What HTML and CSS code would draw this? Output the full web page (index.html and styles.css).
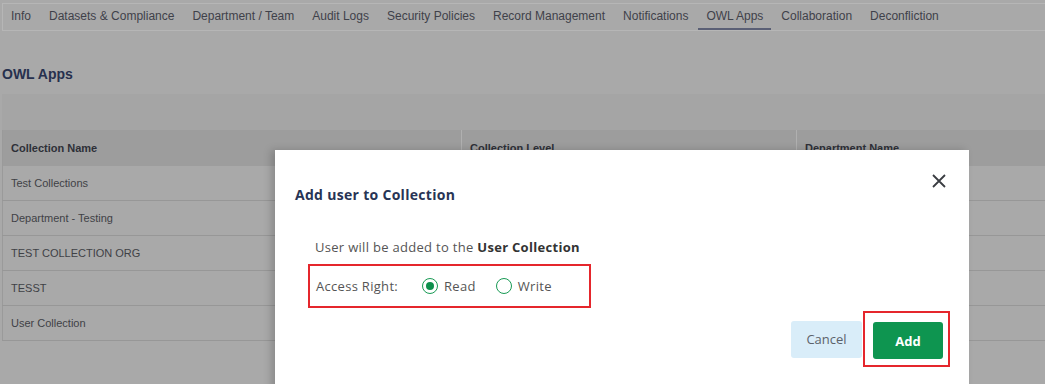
FILE: index.html
```html
<!DOCTYPE html>
<html lang="en">
<head>
  <meta charset="UTF-8">
  <title>OWL Apps</title>
  <link rel="stylesheet" href="styles.css">
</head>
<body>
  <div class="page">
    <nav class="tabs">
      <a>Info</a>
      <a>Datasets &amp; Compliance</a>
      <a>Department / Team</a>
      <a>Audit Logs</a>
      <a>Security Policies</a>
      <a>Record Management</a>
      <a>Notifications</a>
      <a class="active">OWL Apps</a>
      <a>Collaboration</a>
      <a>Deconfliction</a>
    </nav>

    <h2 class="section-title">OWL Apps</h2>

    <div class="toolbar"></div>
    <table class="grid">
      <thead>
        <tr>
          <th class="c-name">Collection Name</th>
          <th class="c-level">Collection Level</th>
          <th>Department Name</th>
        </tr>
      </thead>
      <tbody>
        <tr><td>Test Collections</td><td></td><td></td></tr>
        <tr><td>Department - Testing</td><td></td><td></td></tr>
        <tr><td>TEST COLLECTION ORG</td><td></td><td></td></tr>
        <tr><td>TESST</td><td></td><td></td></tr>
        <tr><td>User Collection</td><td></td><td></td></tr>
      </tbody>
    </table>
  </div>

  <div class="modal">
    <div class="modal-head">
      <h3>Add user to Collection</h3>
      <button class="close" aria-label="Close">
        <svg width="14" height="14" viewBox="0 0 14 14"><path d="M1 1L13 13M13 1L1 13" stroke="#3a3d42" stroke-width="1.8" fill="none"/></svg>
      </button>
    </div>
    <div class="modal-body">
      <p class="note">User will be added to the <b>User Collection</b></p>
      <div class="access highlight">
        <span class="label">Access Right:</span>
        <label class="radio checked"><span class="dot"></span>Read</label>
        <label class="radio"><span class="dot"></span>Write</label>
      </div>
    </div>
    <div class="modal-foot">
      <button class="btn-cancel">Cancel</button>
      <span class="highlight add-wrap"><button class="btn-add">Add</button></span>
    </div>
  </div>
</body>
</html>
```

FILE: styles.css
```css
body {
  margin: 0;
  background: #a9a9a9;
  font-family: 'Liberation Sans', Arial, sans-serif;
  color: #3d3f44;
  height: 384px;
  overflow: hidden;
  position: relative;
}
.page {
  padding: 3px 0 0 2px;
}
.tabs {
  display: flex;
  gap: 2px;
  height: 26px;
  border: 1px solid #b6b6b6;
  border-right: none;
  font-size: 12px;
}
.tabs a {
  padding: 0 8px;
  line-height: 25px;
  color: #3f414a;
  border-bottom: 2px solid transparent;
}
.tabs a.active {
  border-bottom-color: #5a5f75;
}
.section-title {
  margin: 35px 0 0 0;
  font-size: 14px;
  color: #26304e;
}
.toolbar {
  height: 36px;
  margin-top: 12px;
  background: #a5a5a5;
}
.grid {
  width: 1100px;
  border-collapse: collapse;
  font-size: 11px;
  color: #3f4146;
  border-left: 1px solid #9a9a9a;
}
.grid th {
  background: #9d9d9d;
  text-align: left;
  height: 36px;
  padding: 0 8px;
  color: #2e3038;
  border-left: 1px solid #b0b0b0;
}
.grid th:first-child {
  border-left: none;
}
.grid .c-name {
  width: 442px;
}
.grid .c-level {
  width: 318px;
}
.grid td {
  height: 34px;
  padding: 0 8px;
  border-bottom: 1px solid #979797;
}
.modal {
  position: absolute;
  left: 275px;
  top: 150px;
  width: 694px;
  height: 260px;
  background: #fff;
  box-shadow: -4px 0 8px rgba(0,0,0,0.18);
  font-family: 'Open Sans', 'Liberation Sans', sans-serif;
}
.modal-head {
  display: flex;
  justify-content: space-between;
  padding: 20px 20px 0 20px;
}
.modal-head h3 {
  margin: 15px 0 0 0;
  font-size: 14px;
  letter-spacing: 0.3px;
  color: #283455;
}
.close {
  border: none;
  background: none;
  padding: 0;
  width: 20px;
  height: 20px;
  margin: 2px 0 0 0;
}
.modal-body {
  padding: 34px 0 0 33px;
  letter-spacing: 0.3px;
}
.note {
  margin: 0 0 0 7px;
  font-size: 13px;
  color: #555;
}
.note b {
  color: #333;
}
.access {
  display: flex;
  align-items: center;
  width: 273px;
  height: 40px;
  margin-top: 8px;
  padding-left: 6px;
  font-size: 13px;
  color: #555;
}
.highlight {
  border: 2px solid #e5262c;
}
.access .label {
  margin-right: 24px;
}
.radio {
  display: flex;
  align-items: center;
  margin-right: 20px;
}
.radio .dot {
  width: 16px;
  height: 16px;
  border: 1.5px solid #189a54;
  border-radius: 50%;
  margin-right: 6px;
  box-sizing: border-box;
  position: relative;
}
.radio.checked .dot::after {
  content: '';
  position: absolute;
  left: 2.5px;
  top: 2.5px;
  width: 8px;
  height: 8px;
  border-radius: 50%;
  background: #0e8f4c;
}
.modal-foot {
  display: flex;
  justify-content: flex-end;
  align-items: center;
  padding: 3px 19px 0 0;
}
.btn-cancel {
  width: 71px;
  height: 37px;
  border: none;
  border-radius: 3px;
  background: #d9edf9;
  color: #5c626b;
  font-size: 13px;
  font-family: inherit;
  margin-right: 1px;
}
.add-wrap {
  display: flex;
  padding: 9px 5px 6px 8px;
}
.btn-add {
  width: 70px;
  height: 37px;
  border: none;
  border-radius: 3px;
  background: #0e9550;
  color: #fff;
  font-weight: bold;
  font-size: 13px;
  font-family: inherit;
}
```
